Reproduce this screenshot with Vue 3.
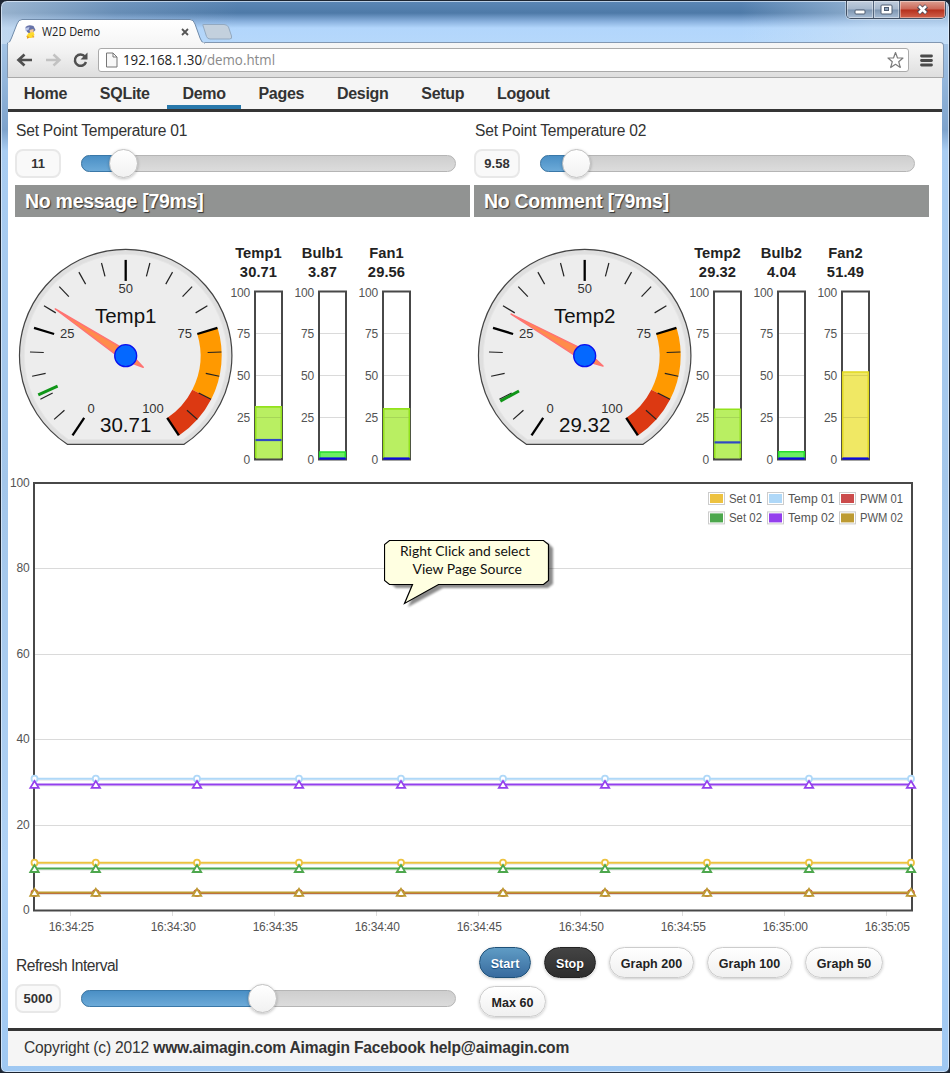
<script setup>
const navItems = ['Home', 'SQLite', 'Demo', 'Pages', 'Design', 'Setup', 'Logout']

const panels = [
  {
    label: 'Set Point Temperature 01', set: 11, text: '11', handle: 42, message: 'No message [79ms]',
    gauge: 'Temp1', value: 30.71,
    meters: [
      { name: 'Temp1', value: 30.71, mark: 11, fill: '#b9ef62', edge: '#93e21c' },
      { name: 'Bulb1', value: 3.87, mark: 0, fill: '#6cf062', edge: '#24dc2c' },
      { name: 'Fan1', value: 29.56, mark: 0, fill: '#b9ef62', edge: '#93e21c' },
    ],
  },
  {
    label: 'Set Point Temperature 02', set: 9.58, text: '9.58', handle: 36, message: 'No Comment [79ms]',
    gauge: 'Temp2', value: 29.32,
    meters: [
      { name: 'Temp2', value: 29.32, mark: 9.58, fill: '#b9ef62', edge: '#93e21c' },
      { name: 'Bulb2', value: 4.04, mark: 0, fill: '#6cf062', edge: '#24dc2c' },
      { name: 'Fan2', value: 51.49, mark: 0, fill: '#f0e864', edge: '#e0d820' },
    ],
  },
]

// Gauge geometry: centre of the dial and the angle covered by 0..100
const cx = 110.7
const cy = 138.7
const start = 33.7
const sweep = 292.6
function polar(value, r) {
  const a = ((start + (value / 100) * sweep) * Math.PI) / 180
  return [cx - r * Math.sin(a), cy + r * Math.cos(a)]
}
function tick(value, r1, r2) {
  const [x1, y1] = polar(value, r1)
  const [x2, y2] = polar(value, r2)
  return { x1, y1, x2, y2 }
}
function band(from, to) {
  const p = [polar(from, 96), polar(to, 96), polar(to, 74.8), polar(from, 74.8)]
  return `M${p[0]} A96 96 0 0 1 ${p[1]} L${p[2]} A74.8 74.8 0 0 0 ${p[3]}Z`
}
function needle(value) {
  const a = ((start + (value / 100) * sweep) * Math.PI) / 180
  const px = 5 * Math.cos(a)
  const py = 5 * Math.sin(a)
  const tip = polar(value, 84.5)
  const tail = polar(value, -21)
  return `M${tip} L${cx + px} ${cy + py} L${tail} L${cx - px} ${cy - py}Z`
}
const minor = Array.from({ length: 19 }, (_, i) => (i + 1) * 5).filter((v) => v % 25)
const major = [0, 25, 50, 75, 100]
const meterY = (v) => 169.5 - v * 1.68

const times = ['25', '30', '35', '40', '45', '50', '55'].map((s) => '16:34:' + s).concat('16:35:00', '16:35:05')
const pointsX = [26.5, 87.8, 189, 291, 393, 495, 597, 699, 801, 903]
const series = [
  { y: 384.7, color: '#edc240', shape: 'circle' },
  { y: 300.7, color: '#afd8f8', shape: 'circle' },
  { y: 415.1, color: '#cb4b4b', shape: 'circle' },
  { y: 390.6, color: '#4da74d', shape: 'triangle' },
  { y: 306.5, color: '#9440ed', shape: 'triangle' },
  { y: 414.4, color: '#bd9b33', shape: 'triangle' },
]
const legend = [
  { x: 700, y: 14, color: '#edc240', text: 'Set 01', w: 33 },
  { x: 759, y: 14, color: '#afd8f8', text: 'Temp 01', w: 46.5 },
  { x: 831, y: 14, color: '#cb4b4b', text: 'PWM 01', w: 43 },
  { x: 700, y: 33.4, color: '#4da74d', text: 'Set 02', w: 33 },
  { x: 759, y: 33.4, color: '#9440ed', text: 'Temp 02', w: 46.5 },
  { x: 831, y: 33.4, color: '#bd9b33', text: 'PWM 02', w: 43 },
]
const buttons = [
  { text: 'Start', kind: 'blue', w: 52 },
  { text: 'Stop', kind: 'dark', w: 52 },
  { text: 'Graph 200', kind: 'light', w: 85 },
  { text: 'Graph 100', kind: 'light', w: 85 },
  { text: 'Graph 50', kind: 'light', w: 78 },
  { text: 'Max 60', kind: 'light', w: 67 },
]
</script>

<template>
  <div class="window">
    <header class="titlebar">
      <svg class="tabs" width="240" height="25" viewBox="0 0 240 25">
        <defs>
          <linearGradient id="tabFill" x1="0" y1="0" x2="0" y2="1">
            <stop offset="0" stop-color="#fff" />
            <stop offset="1" stop-color="#f6f6f6" />
          </linearGradient>
        </defs>
        <path d="M195 6.500Q194 5.500 196 5.500H216Q219 5.500 220.500 8L223.500 17Q224.500 20 221.500 20H202Q199.500 20 198.500 17.500Z" fill="#c3d0dd" stroke="#93a9c0" />
        <path d="M-1 24.500Q2 24 3.500 19L9 5Q10.500 .5 14 .5H182Q185.500 .5 187 5L192 19Q193.500 24 197 24.500Z" fill="url(#tabFill)" stroke="#6f8aa9" />
        <path d="M0 24.500H196.500" stroke="#f6f6f6" stroke-width="2" />
        <g transform="translate(16.500 6)">
          <path d="M1 2Q4-1 9 1L11 5L8 8H4Q1 6 1 2Z" fill="#6672a8" />
          <path d="M1 3L5 2L4 5L1 6Z" fill="#b8c4e8" />
          <path d="M5 5L9 4L9 8L6 9Z" fill="#f2c79a" />
          <path d="M4 8L9 7L10 10L7 13H3L2 11Z" fill="#ffdc2c" />
          <path d="M2 11L5 12L3 14ZM8 10L10 12L8 13Z" fill="#e59a20" />
        </g>
        <text x="34" y="17" class="ui" font-size="12" textLength="58" lengthAdjust="spacingAndGlyphs">W2D Demo</text>
        <path d="M174 10L180 16M180 10L174 16" stroke="#555" stroke-width="1.800" />
      </svg>
      <div class="winbtns">
        <span class="wb min"><svg width="12" height="6"><rect x="1" y="1" width="10" height="4" rx="1" fill="#fff" stroke="#4e5c70" /></svg></span>
        <span class="wb max"><svg width="13" height="11"><rect x="1" y="1" width="11" height="9" rx="1" fill="#fff" stroke="#4e5c70" /><rect x="4.500" y="3.500" width="4" height="3" fill="#8fa4bb" stroke="#4e5c70" /></svg></span>
        <span class="wb close"><svg width="13" height="11"><path d="M2.500 2L10.500 9M10.500 2L2.500 9" stroke="#4b4654" stroke-width="4.500" /><path d="M3 2L10 9M10 2L3 9" stroke="#fff" stroke-width="2.600" /></svg></span>
      </div>
    </header>

    <div class="toolbar">
      <svg width="86" height="24" class="navicons">
        <path d="M2.500 12H16M8.500 6.500L2.500 12L8.500 17.500" fill="none" stroke="#505050" stroke-width="2.700" />
        <path d="M30 12H43.500M37.500 6.500L43.500 12L37.500 17.500" fill="none" stroke="#c2c2c2" stroke-width="2.500" />
        <g transform="translate(-8.500 0)">
          <path d="M77.500 8.500A5.700 5.700 0 1 0 78.500 14" fill="none" stroke="#505050" stroke-width="2.500" />
          <path d="M80 4.500V11.500H73Z" fill="#505050" />
        </g>
      </svg>
      <div class="address">
        <svg width="14" height="16"><path d="M1.500 1H8L12 5V15H1.500ZM8 1V5H12" fill="#f8f8f8" stroke="#777" /></svg>
        <svg class="url" width="156" height="22"><text x="0" y="16" class="ui" font-size="14.500" textLength="152" lengthAdjust="spacingAndGlyphs">192.168.1.30<tspan fill="#8a8a8a">/demo.html</tspan></text></svg>
        <svg class="star" width="19" height="19" viewBox="0 0 19 19"><path d="M9.500 1.500L11.500 7H17L12.700 10.700L14.300 16.500L9.500 13.300L4.700 16.500L6.300 10.700L2 7H7.500Z" fill="#fff" stroke="#7b7b7b" stroke-width="1.200" stroke-linejoin="round" /></svg>
      </div>
      <svg class="burger" width="13" height="13"><path d="M1.500 2H11.500M1.500 6.500H11.500M1.500 11H11.500" stroke="#4a4a4a" stroke-width="2.800" stroke-linecap="round" /></svg>
    </div>

    <main class="page">
      <nav class="nav">
        <a v-for="item in navItems" :key="item" :class="{ active: item === 'Demo' }">{{ item }}</a>
      </nav>

      <div class="panels">
        <section v-for="p in panels" :key="p.gauge" class="panel">
          <label class="label">{{ p.label }}</label>
          <div class="slider">
            <span class="num">{{ p.text }}</span>
            <div class="track">
              <div class="fill" :style="{ width: p.handle + 'px' }"></div>
              <div class="handle" :style="{ left: p.handle + 'px' }"></div>
            </div>
          </div>
          <h2 class="message">{{ p.message }}</h2>
          <div class="instruments">
            <svg class="gauge" width="212" height="261">
              <path d="M52.300 227.300A106.200 106.200 0 1 1 169.100 227.300Z" fill="#dfdfdf" stroke="#444" stroke-width="1.200" />
              <path d="M53.300 222.500A101.500 101.500 0 1 1 168.100 222.500Z" fill="#ededed" stroke="#e5e5e5" />
              <path :d="band(75, 90)" fill="#ff9900" />
              <path :d="band(90, 100)" fill="#dc3912" />
              <line v-for="v in minor" :key="v" v-bind="tick(v, 95.800, 82)" stroke="#222" stroke-width="1.200" />
              <line v-for="v in major" :key="'m' + v" v-bind="tick(v, 95.800, 74.800)" stroke="#000" stroke-width="2.300" />
              <line v-bind="tick(p.set, 95.800, 74.600)" stroke="#109618" stroke-width="3" />
              <text x="110.700" y="76" class="gl">50</text>
              <text x="52.300" y="121" class="gl">25</text>
              <text x="169.700" y="121" class="gl">75</text>
              <text x="76.200" y="195.500" class="gl">0</text>
              <text x="138" y="195.500" class="gl">100</text>
              <text x="110.700" y="106" class="gt">{{ p.gauge }}</text>
              <text x="110.700" y="214.500" class="gt">{{ p.value }}</text>
              <path :d="needle(p.value)" fill="#ff8c4b" stroke="#ff7373" stroke-width="1.500" stroke-linejoin="round" />
              <circle :cx="cx" :cy="cy" r="11" fill="#0468ff" stroke="#0a10ee" stroke-width="1.300" />
            </svg>
            <div v-for="m in p.meters" :key="m.name" class="meter">
              <div class="mname">{{ m.name }}</div>
              <div class="mvalue">{{ m.value }}</div>
              <svg width="64" height="180">
                <path d="M28 44.500H55M28 86.500H55M28 128.500H55" stroke="#dadada" />
                <rect x="28" :y="meterY(m.value)" width="27" :height="170 - meterY(m.value)" :fill="m.fill" />
                <path d="M29 128.500H54" stroke="#000" stroke-opacity=".1" v-if="m.value > 25" />
                <path d="M29 86.500H54" stroke="#000" stroke-opacity=".1" v-if="m.value > 50" />
                <rect x="28" y="2.500" width="27" height="168" fill="none" stroke="#484848" stroke-width="2" />
                <path :d="`M28.700 169V${meterY(m.value)}H54.300V169`" fill="none" :stroke="m.edge" stroke-width="1.600" />
                <line x1="28.500" x2="54.500" :y1="meterY(m.mark)" :y2="meterY(m.mark)" :stroke="m.mark ? '#2f49c4' : '#0a0ae0'" stroke-width="2.200" />
                <text v-for="(t, i) in [100, 75, 50, 25, 0]" :key="t" x="23" :y="7.500 + i * 41.800" class="tick">{{ t }}</text>
              </svg>
            </div>
          </div>
        </section>
      </div>

      <div class="chart">
        <svg class="plot" width="934" height="462">
          <path v-for="i in 4" :key="i" :d="`M26 ${Math.round(5 + i * 85.400) + .5}H904`" stroke="#dadada" />
          <path v-for="(t, i) in times" :key="'g' + t" :d="`M${62.500 + i * 102} 433V438`" stroke="#ddd" />
          <rect x="26" y="5" width="878" height="427.500" fill="none" stroke="#484848" stroke-width="2" />
          <g v-for="(s, i) in series" :key="i" :stroke="s.color" stroke-width="2">
            <path :d="`M26 ${s.y + 1.500}H903`" stroke="#000" stroke-opacity=".1" stroke-width="1" />
            <path :d="`M26 ${s.y}H903`" />
            <template v-for="x in pointsX" :key="x">
              <circle v-if="s.shape === 'circle'" :cx="x" :cy="s.y" r="3" fill="#fff" stroke-width="1.800" />
              <path v-else :d="`M${x - 4.200} ${s.y + 3.400}L${x} ${s.y - 3.600}L${x + 4.200} ${s.y + 3.400}Z`" fill="#fff" stroke-width="1.800" />
            </template>
          </g>
          <text v-for="(t, i) in [100, 80, 60, 40, 20, 0]" :key="'y' + t" x="21.500" :y="9 + i * 85.400" class="tick">{{ t }}</text>
          <text v-for="(t, i) in times" :key="t" :x="63.200 + i * 102" y="452.500" class="time">{{ t }}</text>
          <g v-for="l in legend" :key="l.text">
            <rect :x="l.x + .5" :y="l.y + .5" width="16" height="12" fill="#fff" stroke="#ccc" />
            <rect :x="l.x + 2" :y="l.y + 2" width="13" height="9" :fill="l.color" />
            <text :x="l.x + 21" :y="l.y + 10.500" class="leg" :textLength="l.w" lengthAdjust="spacingAndGlyphs">{{ l.text }}</text>
          </g>
        </svg>
        <svg class="callout" width="180" height="74">
          <path d="M12 4H164L169 9V45L164 49H59L24 68L32 49H12L7 45V9Z" fill="#000" opacity=".45" class="shade" />
          <path d="M5.500 1.500H159.500L164.500 5.500V41.500L159.500 45.500H54.500L20.500 64.500L28.500 45.500H5.500L.5 41.500V5.500Z" fill="#ffffe1" stroke="#000" stroke-width="1.200" />
          <text x="16" y="16.500" class="tip" textLength="130" lengthAdjust="spacingAndGlyphs">Right Click and select</text>
          <text x="28.500" y="34.500" class="tip" textLength="109.500" lengthAdjust="spacingAndGlyphs">View Page Source</text>
        </svg>
      </div>

      <div class="bottom">
        <section class="refresh">
          <label class="label">Refresh Interval</label>
          <div class="slider">
            <span class="num">5000</span>
            <div class="track">
              <div class="fill half"></div>
              <div class="handle mid"></div>
            </div>
          </div>
        </section>
        <section class="buttons">
          <button v-for="b in buttons" :key="b.text" :class="['btn', b.kind]" :style="{ width: b.w + 'px' }">{{ b.text }}</button>
        </section>
      </div>

      <footer class="footer">Copyright (c) 2012 <b>www.aimagin.com Aimagin Facebook help@aimagin.com</b></footer>
    </main>
  </div>
</template>

<style>
body { margin: 0; background: #1d2633; }
</style>

<style scoped>
* { box-sizing: border-box; }
.window {
  width: 950px; height: 1073px; padding: 0 6px 6px 7px; overflow: hidden;
  display: flex; flex-direction: column;
  border: 1px solid #1c2430; border-radius: 7px 7px 6px 6px;
  background:
    linear-gradient(90deg, rgba(200, 215, 230, .6), rgba(180, 200, 222, .25) 12%, transparent 25%, transparent 78%, rgba(210, 228, 245, .5) 92%) 0 0 / 100% 43px no-repeat,
    linear-gradient(180deg, #5b86b5, #4e7aa8 12px, #86aedb 20px, #b2d6fc 27px, #b6d8fb 43px) 0 0 / 100% 43px no-repeat,
    linear-gradient(180deg, #b6d4f2, #7ea3cc 12%, #a9cdf2 14%, #a3c6ea 45%, #b0d2f5 80%, #9fc8f2);
  box-shadow: inset 0 0 0 1px rgba(235, 245, 255, .65);
  font-family: "Liberation Sans", Arial, sans-serif; color: #333;
}
.titlebar { height: 41px; flex: none; display: flex; justify-content: space-between; align-items: flex-start; margin: 0 -3px 0 0; }
.tabs { margin-top: 18px; position: relative; z-index: 1; overflow: visible; }
.ui { font-family: "Open Sans", "Noto Sans", sans-serif; fill: #222; }
.winbtns { display: flex; height: 18px; border: 1px solid #414f63; border-top: 0; border-radius: 0 0 5px 5px; overflow: hidden; box-shadow: 0 0 0 1px rgba(255,255,255,.35); }
.wb { display: flex; align-items: center; justify-content: center; background: linear-gradient(#c0cddd, #a5b7cc 48%, #7d95b1 52%, #a8bdd5); box-shadow: inset 0 0 0 1px rgba(255,255,255,.4); }
.min { width: 27px; border-right: 1px solid #53647b; padding-top: 5px; }
.max { width: 26px; border-right: 1px solid #53647b; }
.close { width: 45px; background: linear-gradient(#dca092, #cb6656 48%, #b52f1c 52%, #d1624c); }
.toolbar { height: 36px; flex: none; margin: 0 -1px; padding: 0 10px 0 8px; display: flex; align-items: center; background: linear-gradient(#f6f6f6, #f1f1f1 30%, #dedede); border: 1px solid #8297b1; border-bottom-color: #a9a9a9; border-radius: 4px 4px 0 0; }
.navicons { flex: none; margin-right: -4px; }
.address { flex: 1; height: 24px; margin-right: 11px; border: 1px solid #aaa; border-radius: 3px; background: #fff; display: flex; align-items: center; padding: 0 3px 0 6px; }
.url { margin-left: 4px; overflow: visible; }
.star { margin-left: auto; }
.burger { flex: none; }
.page { width: 934px; flex: 1; background: #fff; display: flex; flex-direction: column; }
.nav { height: 34px; flex: none; display: flex; gap: 2.700px; padding-left: .8px; background: #f5f5f5; border-bottom: 3px solid #353535; font-size: 16px; letter-spacing: -.28px; font-weight: 700; }
.nav a { padding: 0 15px; height: 31px; line-height: 31px; }
.nav a.active { border-bottom: 4px solid #2878ab; }
.panels { display: flex; gap: 4px; padding-left: 7px; height: 366px; flex: none; }
.panel { width: 455px; }
.label { display: block; height: 37px; padding: 10px 0 0 1px; line-height: 18px; font-size: 15.600px; letter-spacing: -.22px; }
.slider { display: flex; align-items: center; height: 29px; }
.num { width: 46px; height: 29px; border: 2px solid #e8e8e8; border-radius: 8px; background: #f9f9f9; text-align: center; line-height: 25px; font-size: 13px; font-weight: 700; }
.track { position: relative; width: 375px; height: 17px; margin-left: 20px; border: 1px solid #b5b5b5; border-radius: 9px; background: linear-gradient(#cecece, #dcdcdc); }
.fill { height: 17px; margin: -1px; border: 1px solid #3a78a8; border-radius: 9px 0 0 9px; background: linear-gradient(#4a8fc5, #6caad8); }
.fill.half { width: 181px; }
.handle { position: absolute; top: -7px; width: 29px; height: 29px; margin-left: -15px; border: 1px solid #c0c0c0; border-radius: 50%; background: linear-gradient(#fff, #f1f1f1); box-shadow: 0 1px 3px rgba(0,0,0,.25); }
.handle.mid { left: 181px; }
.message { margin: 7px 0 0; height: 32px; padding-left: 10px; background: #919392; color: #fff; font-size: 19.500px; letter-spacing: -.28px; line-height: 32px; text-shadow: 1px 1px 1px #333; }
.instruments { display: flex; height: 261px; }
.gauge { flex: none; overflow: visible; }
.meter { width: 64px; flex: none; padding-top: 27px; text-align: center; font-size: 14.700px; letter-spacing: .1px; line-height: 19px; font-weight: 700; color: #222; }
.mname, .mvalue { margin-left: -1px; }
.meter svg { display: block; margin-top: 7px; height: 180px; font-weight: 400; overflow: visible; }
.gl { font-size: 13px; text-anchor: middle; fill: #333; letter-spacing: 0; }
.gt { font-size: 20.500px; text-anchor: middle; fill: #111; }
.tick { font-size: 12px; letter-spacing: -.15px; text-anchor: end; fill: #545454; }
.time { font-size: 12px; letter-spacing: -.2px; text-anchor: middle; fill: #545454; }
.leg { font-size: 12px; fill: #545454; }
.chart { position: relative; height: 462px; flex: none; }
.plot { display: block; overflow: visible; }
.callout { position: absolute; left: 376px; top: 61px; }
.shade { filter: blur(1.200px); }
.tip { font-family: Lato, sans-serif; font-size: 13.500px; fill: #111; }
.bottom { display: flex; height: 88px; flex: none; padding-left: 7px; }
.refresh { width: 464px; padding-top: 7px; }
.refresh .label { height: 37px; letter-spacing: -.5px; }
.buttons { width: 440px; padding-top: 7px; display: flex; flex-wrap: wrap; gap: 8px 13px; align-content: flex-start; }
.btn { height: 31px; padding: 2px 0 0; border-radius: 16px; border: 1px solid #ccc; font: 700 12.500px "Liberation Sans", Arial, sans-serif; color: #222; background: linear-gradient(#fff, #f0f0f0); box-shadow: 0 1px 3px rgba(0,0,0,.22); letter-spacing: .05px; }
.blue { color: #fff; border-color: #1f5178; background: linear-gradient(#5f9cc5, #396b9e); text-shadow: 0 1px 1px #194b7e; }
.dark { color: #fff; border-color: #222; background: linear-gradient(#444, #2d2d2d); text-shadow: 0 1px 1px #111; }
.footer { flex: 1; border-top: 3px solid #353535; background: #f5f5f5; padding-left: 16px; line-height: 34px; font-size: 15.600px; letter-spacing: -.18px; white-space: nowrap; }
</style>
